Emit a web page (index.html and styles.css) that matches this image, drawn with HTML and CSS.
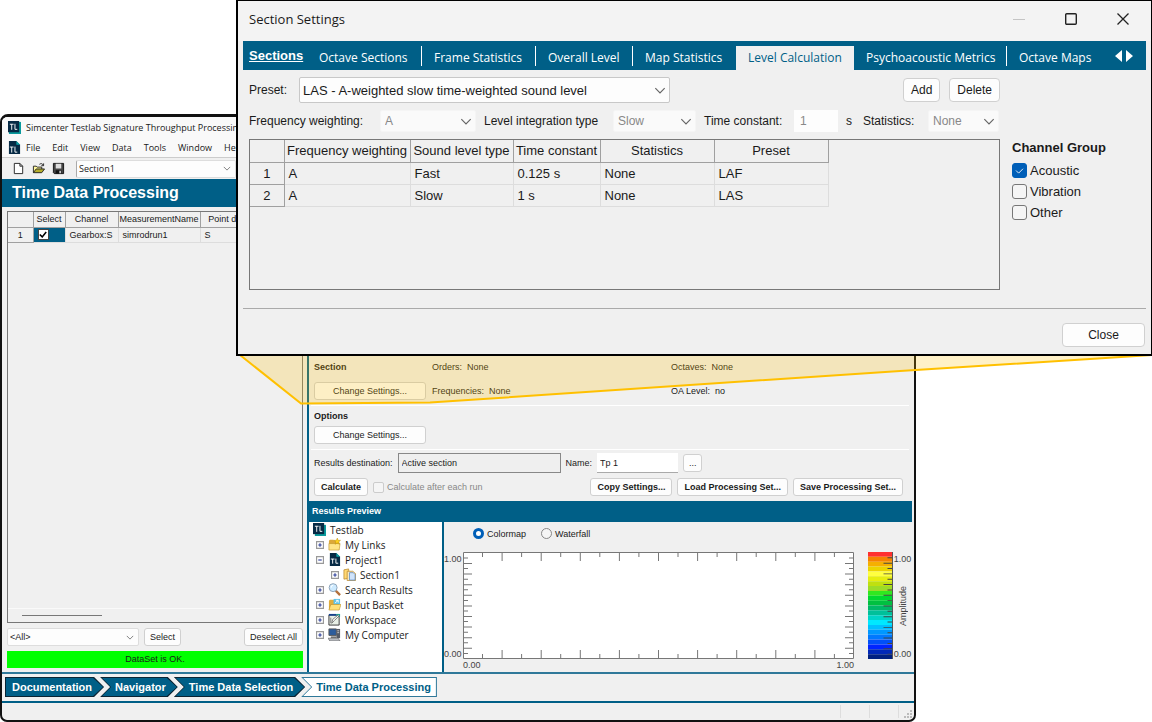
FILE: index.html
```html
<!DOCTYPE html>
<html lang="en">
<head>
    <meta charset="UTF-8">
    <title>Simcenter Testlab Signature Throughput Processing</title>
    <link rel="stylesheet" href="styles.css">
</head>
<body>
    <div class="app-window">
        <header class="title-bar">
            <svg class="icon" viewBox="0 0 14 14"><rect x="1" y="1" width="13" height="13" fill="#0a9a9d"/><path d="M0 0h12v12H0z" fill="#062a45"/><path d="M2 3.500h4M4 3.500v6M7.500 3v6H10" stroke="#fff" fill="none"/></svg>
            <span>Simcenter Testlab Signature Throughput Processing</span>
        </header>
        <nav class="menu-bar">
            <svg class="icon" viewBox="0 0 14 14"><path d="M1 0h8l4 4v10H1z" fill="#062a45"/><path d="M9 0l4 4H9z" fill="#0aa5a8"/><path d="M2 6.500h4M4 6.500v6M7.500 6v6H10" stroke="#fff" fill="none"/></svg>
            <button>File</button>
            <button>Edit</button>
            <button>View</button>
            <button>Data</button>
            <button>Tools</button>
            <button>Window</button>
            <button>Help</button>
        </nav>
        <div class="tool-bar">
            <button aria-label="New"><svg class="icon" viewBox="0 0 14 14"><path d="M2.500 1.500h6l3 3v8h-9zM8.500 1.500v3h3" fill="#fff" stroke="#222"/></svg></button>
            <button aria-label="Open"><svg class="icon" viewBox="0 0 14 14"><path d="M1.500 11.500v-7h3l1 1h5v2" fill="#fff79a" stroke="#222"/><path d="M1.500 11.500l3-4h9l-3 4z" fill="#b5ae2c" stroke="#222"/><path d="M8 2.500c2-1.500 3.500-.5 4 1M12.500 1.500v2.500H10" fill="none" stroke="#222"/></svg></button>
            <button aria-label="Save"><svg class="icon" viewBox="0 0 14 14"><path d="M1.500 1.500h11v11h-10l-1-1z" fill="#444" stroke="#111"/><path d="M4 2h6v5H4z" fill="#ddd"/><path d="M4 9h6v3.500H4z" fill="#111"/><path d="M8 9.500h1.500v2.500H8z" fill="#eee"/></svg></button>
            <select class="combo section-select" aria-label="Section"><option>Section1</option></select>
        </div>
        <h1>Time Data Processing</h1>

        <main class="workspace">
            <section class="channels">
                <div class="grid-box">
                    <table class="grid small-grid">
                        <colgroup><col class="c-num"><col class="c-select"><col class="c-channel"><col class="c-name"><col class="c-point"></colgroup>
                        <thead><tr><th></th><th>Select</th><th>Channel</th><th>MeasurementName</th><th>Point dir</th></tr></thead>
                        <tbody><tr><th>1</th><td class="picked"><input type="checkbox" class="classic-check" aria-label="Select channel 1" checked></td><td>Gearbox:S</td><td>simrodrun1</td><td>S</td></tr></tbody>
                    </table>
                    <div class="scroll-track"><div class="scroll-thumb"></div></div>
                </div>
                <div class="filter-row">
                    <select class="combo all-select" aria-label="Filter"><option>&lt;All&gt;</option></select>
                    <button class="btn">Select</button>
                    <button class="btn push">Deselect All</button>
                </div>
                <p class="status-ok">DataSet is OK.</p>
            </section>

            <section class="processing">
                <div class="settings">
                    <div class="block section-block">
                        <h2>Section</h2>
                        <span>Orders:&nbsp; None</span>
                        <span>Octaves:&nbsp; None</span>
                        <button class="btn wide">Change Settings...</button>
                        <span>Frequencies:&nbsp; None</span>
                        <span>OA Level:&nbsp; no</span>
                    </div>
                    <div class="block options-block">
                        <h2>Options</h2>
                        <button class="btn wide">Change Settings...</button>
                    </div>
                    <div class="block results-block">
                        <div class="row">
                            <label for="dest">Results destination:</label>
                            <input id="dest" class="dest" type="text" value="Active section" readonly>
                            <label for="name">Name:</label>
                            <input id="name" class="name" type="text" value="Tp 1">
                            <button class="btn more" aria-label="Browse">...</button>
                        </div>
                        <div class="row actions">
                            <button class="btn strong">Calculate</button>
                            <label class="check disabled"><input type="checkbox" disabled>Calculate after each run</label>
                            <button class="btn strong push">Copy Settings...</button>
                            <button class="btn strong">Load Processing Set...</button>
                            <button class="btn strong">Save Processing Set...</button>
                        </div>
                    </div>
                </div>

                <h2 class="preview-title">Results Preview</h2>
                <div class="preview">
                    <ul class="tree">
                        <li><svg class="icon" viewBox="0 0 14 14"><path d="M2 2h12v12H2z" fill="#0a9a9d"/><path d="M0 0h12v12H0z" fill="#062a45"/><path d="M2 3.500h4M4 3.500v6M7.500 3v6H10" stroke="#fff" fill="none"/></svg>Testlab</li>
                        <li class="lvl1"><svg class="node" viewBox="0 0 7 7"><path d="M.5.500h6v6h-6z" fill="#fff" stroke="#999"/><path d="M2 3.500h3M3.500 2v3" stroke="#2d3f9a"/></svg><svg class="icon" viewBox="0 0 14 14"><path d="M1 3l1-1h4l1 1h5v10H1z" fill="#dca83a"/><path d="M1 6h12l-1 7H1z" fill="#ffe58a" stroke="#b98a20" stroke-width=".6"/><path d="M10 0l1 2.500h2.500l-2 1.700.8 2.600L10 5.300 7.700 6.800l.8-2.600-2-1.700H9z" fill="#ffd21e" stroke="#a77b00" stroke-width=".4"/></svg>My Links</li>
                        <li class="lvl1"><svg class="node" viewBox="0 0 7 7"><path d="M.5.500h6v6h-6z" fill="#fff" stroke="#999"/><path d="M2 3.500h3" stroke="#2d3f9a"/></svg><svg class="icon" viewBox="0 0 14 14"><path d="M2 0h7l4 4v10H2z" fill="#062a45"/><path d="M9 0l4 4H9z" fill="#0aa5a8"/><path d="M3 6.500h4M5 6.500v5M8.500 6v5H11" stroke="#fff" fill="none"/></svg>Project1</li>
                        <li class="lvl2"><svg class="node" viewBox="0 0 7 7"><path d="M.5.500h6v6h-6z" fill="#fff" stroke="#999"/><path d="M2 3.500h3M3.500 2v3" stroke="#2d3f9a"/></svg><svg class="icon" viewBox="0 0 14 14"><path d="M1 2l5-1 1 10-6 1z" fill="#ffd873" stroke="#b9872a" stroke-width=".8"/><path d="M4.500 3.500h6l3 2.500v7.500h-9z" fill="#f9e9bb" stroke="#b9872a" stroke-width=".8"/><path d="M7 5h4l2 2v6H7z" fill="#cfe3fa" stroke="#5a88c4" stroke-width=".8"/></svg>Section1</li>
                        <li class="lvl1"><svg class="node" viewBox="0 0 7 7"><path d="M.5.500h6v6h-6z" fill="#fff" stroke="#999"/><path d="M2 3.500h3M3.500 2v3" stroke="#2d3f9a"/></svg><svg class="icon" viewBox="0 0 14 14"><path d="M8 8l5 5" stroke="#b3703a" stroke-width="2.500"/><circle cx="5.500" cy="5" r="4.300" fill="#cdeaff" stroke="#8aa0b5"/><path d="M3.500 5a2 2 0 0 1 2-2.500" stroke="#fff" fill="none"/></svg>Search Results</li>
                        <li class="lvl1"><svg class="node" viewBox="0 0 7 7"><path d="M.5.500h6v6h-6z" fill="#fff" stroke="#999"/><path d="M2 3.500h3M3.500 2v3" stroke="#2d3f9a"/></svg><svg class="icon" viewBox="0 0 14 14"><path d="M1 3l1-1h4l1 1h5v10H1z" fill="#e0ad3c"/><path d="M6 1h7v6H6z" fill="#5fc3e8"/><path d="M7.500 5.500L11 2.500M8.500 2.500H11V5" stroke="#fff" fill="none"/><path d="M3 7h11l-2 6H1z" fill="#ffe07a" stroke="#b98a20" stroke-width=".6"/></svg>Input Basket</li>
                        <li class="lvl1"><svg class="node" viewBox="0 0 7 7"><path d="M.5.500h6v6h-6z" fill="#fff" stroke="#999"/><path d="M2 3.500h3M3.500 2v3" stroke="#2d3f9a"/></svg><svg class="icon" viewBox="0 0 14 14"><path d="M1 2h11v11H1z" fill="#e8efe6" stroke="#333"/><path d="M1 1h8v2H1z" fill="#16408c"/><path d="M9 1h4v3H9z" fill="#17a398"/><path d="M4 11l1-4 6-5 1 1-5 5z" fill="#fff" stroke="#555" stroke-width=".8"/><path d="M3 5v6" stroke="#777"/></svg>Workspace</li>
                        <li class="lvl1"><svg class="node" viewBox="0 0 7 7"><path d="M.5.500h6v6h-6z" fill="#fff" stroke="#999"/><path d="M2 3.500h3M3.500 2v3" stroke="#2d3f9a"/></svg><svg class="icon" viewBox="0 0 14 14"><path d="M1 1h8v7H1z" fill="#2d5d9c" stroke="#555"/><path d="M9 1h4v10H9z" fill="#555b66"/><path d="M10 3h2M10 5h2" stroke="#ccc"/><path d="M3 9h6v2H3z" fill="#777"/><path d="M0 11h11l2 3H2z" fill="#b9bcc2" stroke="#555" stroke-width=".6"/></svg>My Computer</li>
                    </ul>
                    <div class="display">
                        <div class="radios">
                            <label class="radio"><input type="radio" name="view" checked>Colormap</label>
                            <label class="radio"><input type="radio" name="view">Waterfall</label>
                        </div>
                        <div class="chart">
                            <div class="y-labels"><span>1.00</span><span>0.00</span></div>
                            <div class="plot">
                                <!-- ticks are dashed strokes: one dash per tick -->
                                <svg class="axes" viewBox="0 0 391 107" preserveAspectRatio="none">
                                    <rect width="391" height="107" fill="#fff"/>
                                    <g stroke="#777" fill="none">
                                        <path d="M19 2.500H390M19 104.500H390" stroke-width="5" stroke-dasharray="1 38.100"/>
                                        <path d="M38.600 4.500H390M38.600 102.500H390" stroke-width="9" stroke-dasharray="1 38.100"/>
                                        <path d="M2.500 5.500V106M388.500 5.500V106" stroke-width="5" stroke-dasharray="1 9.600"/>
                                        <path d="M4.500 11V106M386.500 11V106" stroke-width="9" stroke-dasharray="1 9.600"/>
                                        <path d="M.5.500h390v106H.500z"/>
                                    </g>
                                </svg>
                                <div class="x-labels"><span>0.00</span><span>1.00</span></div>
                            </div>
                            <div class="scale">
                                <svg class="colors" viewBox="0 0 25 110" preserveAspectRatio="none">
                                    <g stroke-width="5">
                                        <path d="M0 2.500h25" stroke="#ff3030"/><path d="M0 7.500h25" stroke="#f58200"/><path d="M0 12.500h25" stroke="#f5b000"/><path d="M0 17.500h25" stroke="#ecd400"/>
                                        <path d="M0 22.500h25" stroke="#ffff40"/><path d="M0 27.500h25" stroke="#e6ee10"/><path d="M0 32.500h25" stroke="#c0e010"/><path d="M0 37.500h25" stroke="#9cdc28"/>
                                        <path d="M0 42.500h25" stroke="#30e820"/><path d="M0 47.500h25" stroke="#00d830"/><path d="M0 52.500h25" stroke="#00c040"/><path d="M0 57.500h25" stroke="#00b868"/>
                                        <path d="M0 62.500h25" stroke="#00c09a"/><path d="M0 67.500h25" stroke="#00d4c8"/><path d="M0 72.500h25" stroke="#00e8ff"/><path d="M0 77.500h25" stroke="#00c0ff"/>
                                        <path d="M0 82.500h25" stroke="#0098ff"/><path d="M0 87.500h25" stroke="#0078ff"/><path d="M0 92.500h25" stroke="#0050f8"/><path d="M0 97.500h25" stroke="#0024ff"/>
                                        <path d="M0 102.500h25" stroke="#0028b8"/><path d="M0 107.500h25" stroke="#002080"/>
                                    </g>
                                    <path d="M22 5.500V109" stroke="#444" stroke-width="5" stroke-dasharray="1 10"/>
                                    <path d="M20 11V109" stroke="#444" stroke-width="9" stroke-dasharray="1 10"/>
                                    <path d="M24.500 0V110" stroke="#555"/>
                                </svg>
                                <div class="scale-labels"><span>1.00</span><span class="vertical">Amplitude</span><span>0.00</span></div>
                            </div>
                        </div>
                    </div>
                </div>
            </section>
        </main>

        <nav class="steps">
            <a href="#">Documentation</a>
            <a href="#">Navigator</a>
            <a href="#">Time Data Selection</a>
            <a href="#" class="current">Time Data Processing</a>
        </nav>
        <footer class="status-bar">
            <span></span><span></span><span></span>
            <svg viewBox="0 0 8 8"><path d="M6 0h2v2H6zM3 3h2v2H3zM6 3h2v2H6zM0 6h2v2H0zM3 6h2v2H3zM6 6h2v2H6z" fill="#bbb"/></svg>
        </footer>
    </div>

    <svg class="callout" width="1152" height="722" viewBox="0 0 1152 722">
        <path d="M240 355L301 403.500 430 402.500 900 371 1090 359 1152 355" fill="#ffc000" fill-opacity=".22" stroke="#ffc000" stroke-width="2"/>
    </svg>

    <div class="dialog" role="dialog" aria-label="Section Settings">
        <header class="dialog-title">
            <span>Section Settings</span>
            <button aria-label="Minimize" disabled><svg viewBox="0 0 14 14"><path d="M1 7.500h12" stroke="#c4c4c4"/></svg></button>
            <button aria-label="Maximize"><svg viewBox="0 0 14 14"><rect x="1.700" y="1.700" width="10.600" height="10.600" rx="1" fill="none" stroke="#222" stroke-width="1.400"/></svg></button>
            <button aria-label="Close window"><svg viewBox="0 0 14 14"><path d="M1.500 1.500l11 11M12.500 1.500l-11 11" stroke="#222" stroke-width="1.300"/></svg></button>
        </header>
        <nav class="tabs">
            <button class="tab lead">Sections</button>
            <button class="tab split">Octave Sections</button>
            <button class="tab split">Frame Statistics</button>
            <button class="tab split">Overall Level</button>
            <button class="tab">Map Statistics</button>
            <button class="tab active">Level Calculation</button>
            <button class="tab split">Psychoacoustic Metrics</button>
            <button class="tab">Octave Maps</button>
            <button class="tab-scroll" aria-label="Scroll tabs"><svg viewBox="0 0 20 14"><path d="M8 1v12L1 7zM12 1v12l7-6z" fill="#fff"/></svg></button>
        </nav>
        <div class="dialog-body">
            <div class="levels">
                <div class="preset-row">
                    <label for="preset">Preset:</label>
                    <select id="preset" class="combo"><option>LAS - A-weighted slow time-weighted sound level</option></select>
                    <button class="btn push">Add</button>
                    <button class="btn">Delete</button>
                </div>
                <div class="params">
                    <label for="weighting">Frequency weighting:</label>
                    <select id="weighting" class="combo" disabled><option>A</option></select>
                    <label for="integration">Level integration type</label>
                    <select id="integration" class="combo" disabled><option>Slow</option></select>
                    <label for="constant">Time constant:</label>
                    <input id="constant" type="text" value="1" disabled>
                    <span>s</span>
                    <label for="stats">Statistics:</label>
                    <select id="stats" class="combo" disabled><option>None</option></select>
                </div>
                <div class="grid-box">
                    <table class="grid level-grid">
                        <colgroup><col class="c-num"><col class="c-freq"><col class="c-type"><col class="c-const"><col class="c-stat"><col class="c-stat"></colgroup>
                        <thead><tr><th></th><th>Frequency weighting</th><th>Sound level type</th><th>Time constant</th><th>Statistics</th><th>Preset</th></tr></thead>
                        <tbody>
                            <tr><th>1</th><td>A</td><td>Fast</td><td>0.125 s</td><td>None</td><td>LAF</td></tr>
                            <tr><th>2</th><td>A</td><td>Slow</td><td>1 s</td><td>None</td><td>LAS</td></tr>
                        </tbody>
                    </table>
                </div>
            </div>
            <fieldset class="group">
                <legend>Channel Group</legend>
                <label class="check"><input type="checkbox" checked>Acoustic</label>
                <label class="check"><input type="checkbox">Vibration</label>
                <label class="check"><input type="checkbox">Other</label>
            </fieldset>
        </div>
        <footer class="dialog-footer">
            <button class="btn">Close</button>
        </footer>
    </div>
</body>
</html>
```

FILE: styles.css
```css
* {
    box-sizing: border-box;
}

body {
    margin: 0;
    min-height: 100vh;
    position: relative;
    overflow: hidden;
    background-color: #fff;
    color: #1a1a1a;
    font-family: "Liberation Sans", Arial, sans-serif;
    font-size: 9px;
}

h1, h2, p, ul {
    margin: 0;
    padding: 0;
}

button, input, select {
    font: inherit;
    color: inherit;
    margin: 0;
}

button {
    padding: 0;
    border: none;
    background: none;
}

svg {
    display: block;
    flex: none;
}

.icon {
    width: 13px;
    height: 13px;
}

/* shared controls */
.btn {
    height: 18px;
    padding: 0 5px;
    border: 1px solid #d0d0d0;
    border-radius: 3px;
    background-color: #fdfdfd;
    white-space: nowrap;
}

.strong {
    padding: 0 6px;
    font-weight: bold;
}

.push {
    margin-left: auto;
}

.combo {
    appearance: none;
    height: 18px;
    padding: 0 4px;
    border: 1px solid #ddd;
    border-radius: 2px;
    background: #fdfdfd url("data:image/svg+xml,%3Csvg xmlns='http://www.w3.org/2000/svg' viewBox='0 0 10 6'%3E%3Cpath d='M1 1l4 4 4-4' fill='none' stroke='%23666'/%3E%3C/svg%3E") no-repeat right 4px center / 8px 5px;
}

.check, .radio {
    display: flex;
    align-items: center;
    gap: 3px;
}

.check input {
    appearance: none;
    width: 15px;
    height: 15px;
    border: 1px solid #777;
    border-radius: 3px;
    background-color: #f5f5f5;
}

.check input:checked {
    border-color: #005fb8;
    background: #005fb8 url("data:image/svg+xml,%3Csvg xmlns='http://www.w3.org/2000/svg' viewBox='0 0 10 8'%3E%3Cpath d='M1 4l3 3 5-5' fill='none' stroke='%23fff'/%3E%3C/svg%3E") no-repeat center / 9px 7px;
}

.check.disabled {
    color: #888;
}

.check.disabled input {
    width: 11px;
    height: 11px;
    border-color: #ccc;
    border-radius: 2px;
}

.radio input {
    appearance: none;
    width: 11px;
    height: 11px;
    border: 1px solid #888;
    border-radius: 50%;
    background-color: #f5f5f5;
}

.radio input:checked {
    border: 3px solid #005fb8;
    background-color: #fff;
}

/* data grids */
.grid {
    table-layout: fixed;
    border-collapse: collapse;
    white-space: nowrap;
}

.grid th, .grid td {
    padding: 0 4px;
    overflow: hidden;
    font-weight: normal;
    text-align: left;
    border-right: 1px solid #ddd;
    border-bottom: 1px solid #ddd;
}

.grid th {
    padding: 0;
    text-align: center;
    border-color: #a0a0a0;
}

.grid-box {
    overflow: hidden;
    border: 1px solid #777;
}

/* main window */
.app-window {
    position: absolute;
    top: 114px;
    left: 0;
    right: 236px;
    bottom: 0;
    display: flex;
    flex-direction: column;
    border: 2px solid #111;
    border-top-width: 3px;
    border-radius: 8px 0 7px 7px;
    background-color: #f0f0f0;
    overflow: hidden;
}

.title-bar, .menu-bar {
    display: flex;
    align-items: center;
    padding-left: 6px;
    background-color: #f9f9f9;
    font-family: "Open Sans", "Noto Sans", sans-serif;
    white-space: nowrap;
}

.title-bar {
    gap: 5px;
    height: 21px;
    font-size: 9px;
}

.menu-bar {
    gap: 12px;
    height: 19px;
    font-size: 9px;
}

.menu-bar .icon {
    margin-right: -7px;
}

.tool-bar {
    display: flex;
    align-items: center;
    gap: 7px;
    height: 22px;
    padding-left: 10px;
    font-family: "Open Sans", "Noto Sans", sans-serif;
    border-top: 1px solid #ccc;
}

.section-select {
    width: 160px;
    margin-left: 4px;
    padding: 0 2px;
    border-left: 1px solid #aaa;
}

h1 {
    padding-left: 10px;
    background-color: #005f87;
    color: #fff;
    font-size: 16px;
    line-height: 28px;
}

.workspace {
    flex: 1;
    display: flex;
    min-height: 0;
    padding-right: 2px;
    border-bottom: 2px solid #2f7899;
}

.channels {
    width: 305px;
    display: flex;
    flex-direction: column;
    gap: 5px;
    padding: 4px 4px 4px 5px;
}

.channels .grid-box {
    flex: 1;
    display: flex;
    flex-direction: column;
}

.small-grid {
    width: 242px;
}

.small-grid tr {
    height: 15px;
}

.small-grid td, .small-grid tbody th {
    height: 14px;
    line-height: 12px;
}

.small-grid .c-num { width: 25px; }
.small-grid .c-select { width: 32px; }
.small-grid .c-channel { width: 53px; }
.small-grid .c-name { width: 82px; }

.grid .picked {
    background-color: #005f87;
}

.classic-check {
    appearance: none;
    display: block;
    width: 11px;
    height: 11px;
    border: 1px solid #444;
    background: #fff url("data:image/svg+xml,%3Csvg xmlns='http://www.w3.org/2000/svg' viewBox='0 0 10 8'%3E%3Cpath d='M1 4l3 3 5-6' fill='none' stroke='%23000' stroke-width='2'/%3E%3C/svg%3E") no-repeat center / 8px 7px;
}

.scroll-track {
    margin-top: auto;
    padding: 6px 14px;
    border-top: 1px solid #fafafa;
}

.scroll-thumb {
    width: 80px;
    height: 1px;
    background-color: #777;
}

.filter-row {
    display: flex;
    gap: 5px;
}

.all-select {
    width: 132px;
    padding: 0 2px;
}

.status-ok {
    background-color: #0f0;
    line-height: 17px;
    text-align: center;
}

.processing {
    flex: 1;
    min-width: 0;
    display: flex;
    flex-direction: column;
    border-left: 2px solid #005f87;
}

.settings {
    flex: 1;
    display: flex;
    flex-direction: column;
    justify-content: flex-end;
    padding: 0 3px 0 2px;
}

.block {
    padding: 3px 3px 5px;
    border-top: 1px solid #fff;
}

.block h2 {
    font-size: 9px;
    line-height: 14px;
}

.section-block {
    display: grid;
    grid-template-columns: 118px 239px 1fr;
    align-items: center;
    row-gap: 8px;
    border-top: none;
}

.options-block .btn {
    margin-top: 3px;
}

.wide {
    width: 112px;
}

.row {
    display: flex;
    align-items: center;
    gap: 5px;
}

.dest, .name {
    height: 20px;
    padding: 0 3px;
}

.dest {
    width: 163px;
    border: 1px solid #888;
    background-color: #efefef;
}

.name {
    width: 81px;
    border: none;
    border-bottom: 1px solid #aaa;
    background-color: #fff;
}

.more {
    width: 19px;
}

.actions {
    margin-top: 5px;
    padding-right: 3px;
}

.preview-title {
    padding-left: 3px;
    background-color: #005f87;
    color: #fff;
    font-size: 9px;
    line-height: 21px;
}

.preview {
    display: flex;
    height: 150px;
}

.tree {
    width: 135px;
    padding: 0 4px;
    border-right: 2px solid #005f87;
    background-color: #fff;
    list-style: none;
    font-family: "Open Sans", "Noto Sans", sans-serif;
    font-size: 10px;
}

.tree li {
    display: flex;
    align-items: center;
    gap: 4px;
    height: 15px;
}

.tree .lvl1 {
    padding-left: 3px;
}

.tree .lvl2 {
    padding-left: 18px;
}

.node {
    width: 8px;
    height: 8px;
}

.display {
    flex: 1;
    display: flex;
    flex-direction: column;
}

.radios {
    display: flex;
    gap: 15px;
    padding: 6px 29px 13px;
}

.chart {
    flex: 1;
    display: flex;
    color: #444;
}

.y-labels {
    width: 19px;
    height: 107px;
    display: flex;
    flex-direction: column;
    justify-content: space-between;
    padding-top: 2px;
}

.plot {
    flex: 1;
}

.axes {
    width: 100%;
    height: 107px;
}

.x-labels {
    display: flex;
    justify-content: space-between;
    line-height: 13px;
}

.scale {
    display: flex;
    height: 107px;
    margin-left: 14px;
}

.colors {
    width: 25px;
    height: 107px;
}

.scale-labels {
    width: 19px;
    display: flex;
    flex-direction: column;
    justify-content: space-between;
    align-items: center;
    padding-top: 2px;
}

.vertical {
    writing-mode: vertical-rl;
    transform: rotate(180deg);
}

/* step arrows */
.steps {
    display: flex;
    padding: 3px 3px 4px;
    border-bottom: 2px solid #005f87;
    font-size: 11px;
    font-weight: bold;
}

.steps a {
    position: relative;
    z-index: 0;
    padding: 0 12px 0 15px;
    margin-right: -4px;
    line-height: 20px;
    color: #fff;
    text-decoration: none;
    white-space: nowrap;
    background-color: #0b2433;
    clip-path: polygon(0 0, calc(100% - 10px) 0, 100% 50%, calc(100% - 10px) 100%, 0 100%, 10px 50%);
}

.steps a::before {
    content: "";
    position: absolute;
    z-index: -1;
    inset: 1px;
    background-color: #005f87;
    clip-path: polygon(1px 0, calc(100% - 10px) 0, 100% 50%, calc(100% - 10px) 100%, 1px 100%, 10px 50%);
}

.steps a:first-child {
    padding-left: 7px;
    clip-path: polygon(0 0, calc(100% - 10px) 0, 100% 50%, calc(100% - 10px) 100%, 0 100%);
}

.steps a:first-child::before {
    clip-path: polygon(0 0, calc(100% - 10px) 0, 100% 50%, calc(100% - 10px) 100%, 0 100%);
}

.steps .current {
    padding-right: 6px;
    color: #005f87;
    background-color: #2f7899;
    clip-path: polygon(0 0, 100% 0, 100% 100%, 0 100%, 10px 50%);
}

.steps .current::before {
    background-color: #fff;
    clip-path: polygon(1px 0, 100% 0, 100% 100%, 1px 100%, 10px 50%);
}

.status-bar {
    display: flex;
    justify-content: flex-end;
    align-items: flex-end;
    height: 17px;
    padding: 2px;
}

.status-bar span {
    width: 29px;
    height: 13px;
    border-left: 1px solid #ddd;
}

.status-bar svg {
    width: 8px;
    height: 8px;
    margin-left: -23px;
}

/* shaded pointer from the dialog to its button */
.callout {
    position: absolute;
    top: 0;
    left: 0;
    pointer-events: none;
}

/* section settings dialog */
.dialog {
    position: absolute;
    top: 0;
    left: 236px;
    right: 0;
    border: 1px solid #000;
    border-left-width: 2px;
    border-bottom-width: 2px;
    background-color: #f0f0f0;
    font-size: 13px;
}

.dialog-title {
    display: flex;
    align-items: center;
    gap: 38px;
    height: 40px;
    padding: 0 21px 4px 11px;
    background-color: #f3f3f3;
    font-family: "Open Sans", "Noto Sans", sans-serif;
}

.dialog-title span {
    margin-right: auto;
}

.dialog-title svg {
    width: 14px;
    height: 14px;
}

.tabs {
    display: grid;
    grid-template-columns: 64px 115px 114px 97px 103px 118px 153px 95px 1fr;
    align-items: center;
    height: 29px;
    margin: 0 5px;
    background-color: #005f87;
    color: #fff;
    font-family: "Open Sans", "Noto Sans", sans-serif;
    font-size: 12px;
}

.tab {
    padding: 3px 0 0 12px;
    text-align: left;
    white-space: nowrap;
}

.split {
    border-right: 1px solid #fff;
}

.tab.lead {
    padding: 0 0 0 6px;
    font-family: "Liberation Sans", Arial, sans-serif;
    font-size: 13px;
    font-weight: bold;
    text-decoration: underline;
}

.tab.active {
    align-self: end;
    height: 24px;
    padding-top: 0;
    padding-bottom: 2px;
    background-color: #f0f0f0;
    color: #005f87;
}

.tab-scroll {
    justify-self: center;
}

.tab-scroll svg {
    width: 20px;
    height: 14px;
}

.dialog-body {
    display: flex;
    gap: 12px;
    margin: 0 5px;
    padding: 7px 0 18px 6px;
    border-bottom: 1px solid #aaa;
}

.levels {
    flex: 1;
    min-width: 0;
}

.dialog .combo {
    height: 22px;
    background-position: right 3px center;
    background-size: 12px 7px;
}

.preset-row {
    display: flex;
    align-items: center;
    gap: 9px;
}

.preset-row label {
    width: 41px;
    font-size: 12px;
}

.preset-row .combo {
    width: 371px;
    height: 26px;
    padding: 0 3px;
    border-color: #c8c8c8;
}

.dialog .btn {
    height: 24px;
    padding: 0 7px;
    border-radius: 4px;
    font-size: 12px;
}

.params {
    display: grid;
    grid-template-columns: 123px 96px 121px 83px 82px 44px 9px 57px 71px;
    column-gap: 8px;
    align-items: center;
    margin: 7px 0;
    font-size: 12px;
    white-space: nowrap;
}

.params input {
    height: 22px;
    min-width: 0;
    padding: 0 6px;
    border: none;
    background-color: #fdfdfd;
    color: #888;
}

.params .combo {
    border-color: #f5f5f5;
    background-color: #fafafa;
    color: #888;
    opacity: 1;
}

.levels .grid-box {
    height: 151px;
}

.level-grid {
    width: 578px;
}

.level-grid tr {
    height: 22px;
}

.level-grid .c-num { width: 34px; }
.level-grid .c-freq { width: 126px; }
.level-grid .c-type { width: 103px; }
.level-grid .c-const { width: 87px; }
.level-grid .c-stat { width: 114px; }

.group {
    width: 134px;
    margin: 0;
    padding: 0;
    border: none;
}

.group legend {
    padding: 63px 0 5px;
    font-weight: bold;
}

.group .check {
    height: 21px;
}

.dialog-footer {
    display: flex;
    justify-content: flex-end;
    padding: 14px 6px 7px;
}

.dialog-footer .btn {
    width: 83px;
}
```
